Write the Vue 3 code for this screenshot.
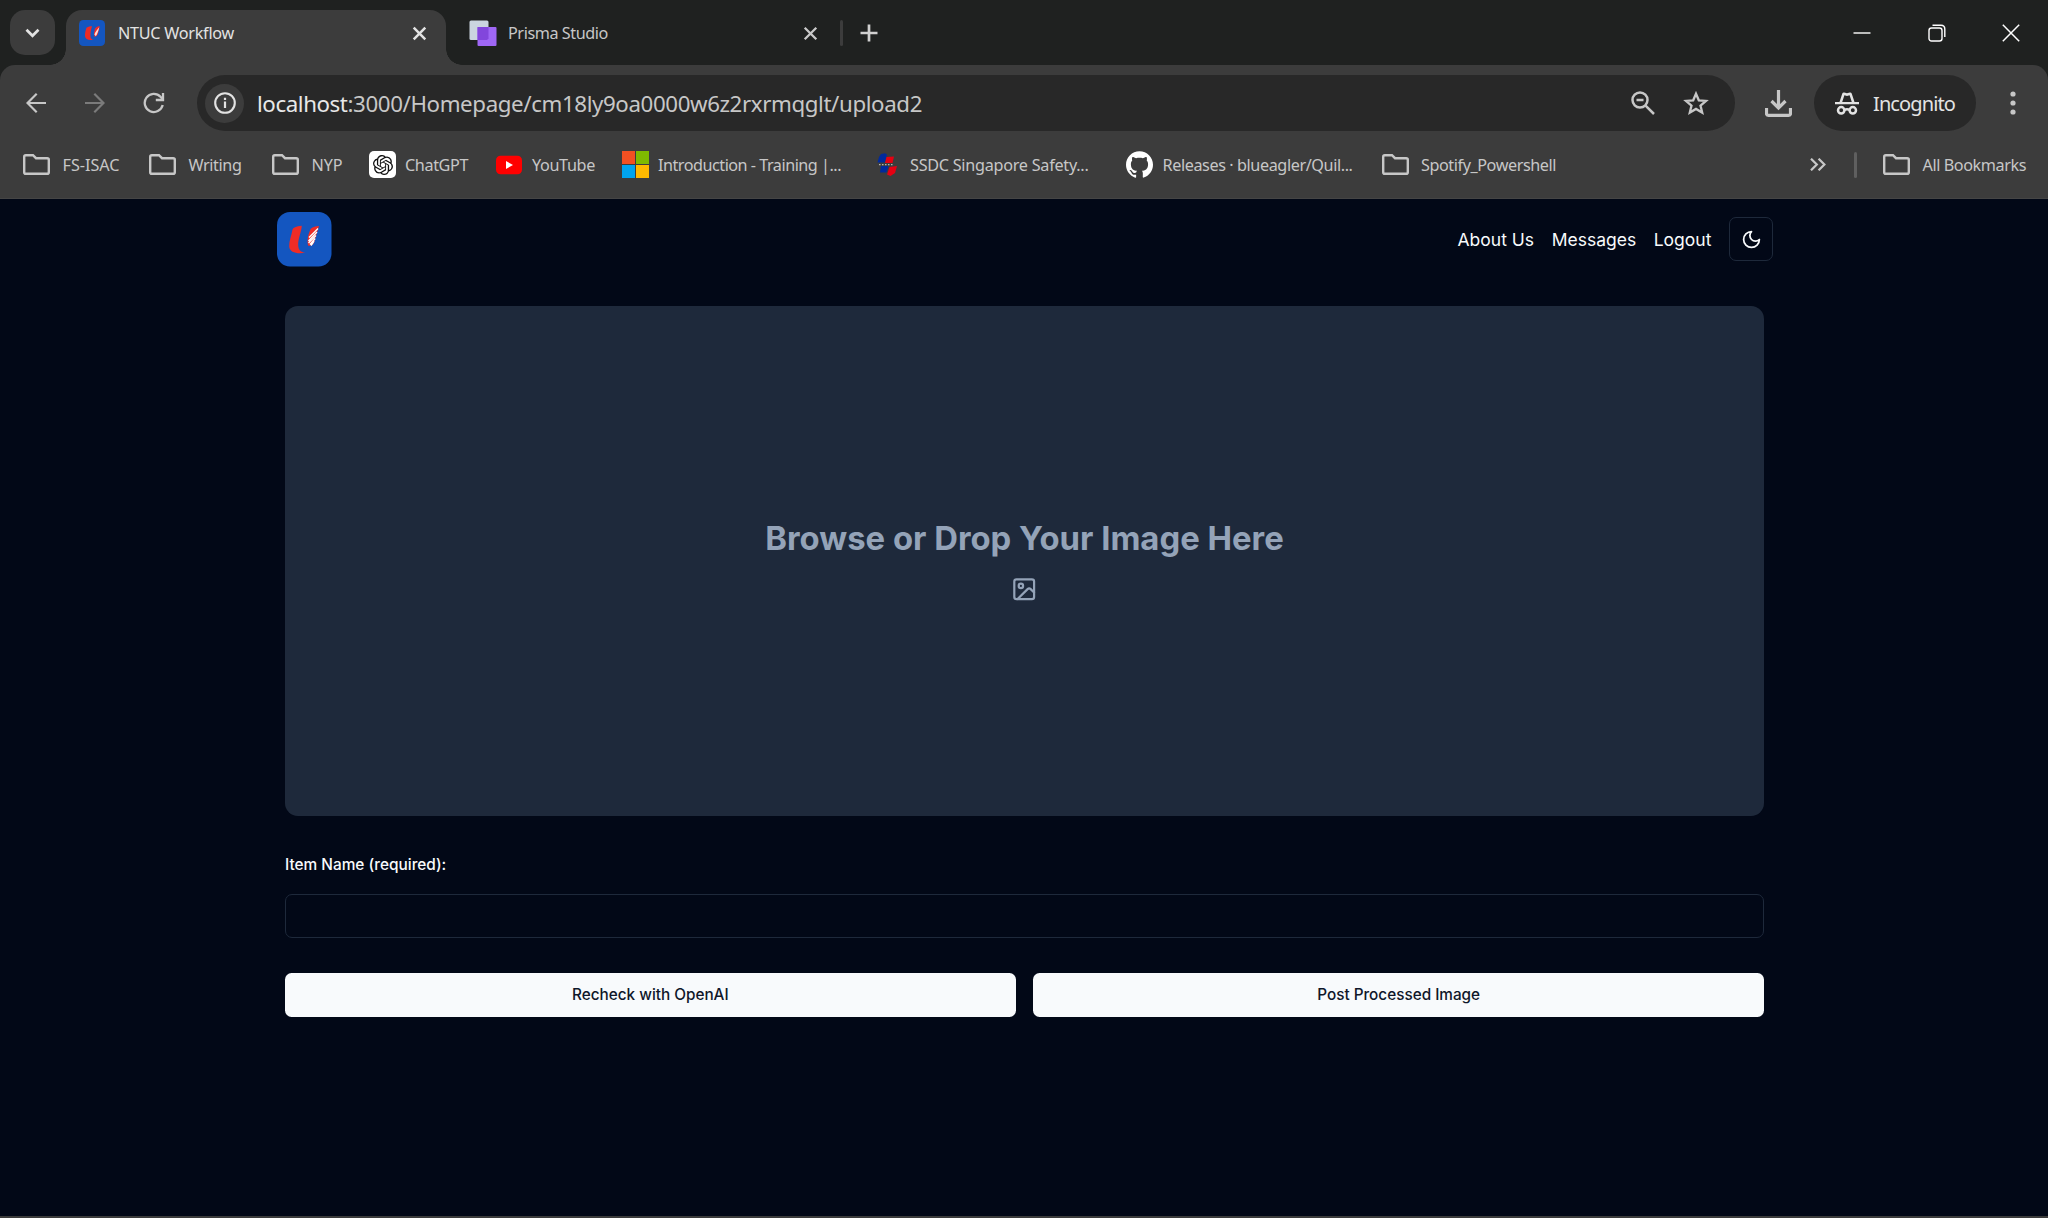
<script setup>
// Spreads a label over the given width (px) by adjusting its letter spacing.
const vFit = {
  mounted(el, { value }) {
    const natural = el.getBoundingClientRect().width
    el.style.letterSpacing = (value - natural) / el.textContent.length + 'px'
  }
}

const bookmarks = [
  { icon: 'folder', label: 'FS-ISAC', width: 57, gap: 29.5 },
  { icon: 'folder', label: 'Writing', width: 53, gap: 30.5 },
  { icon: 'folder', label: 'NYP', width: 31, gap: 26.5 },
  { icon: 'chatgpt', label: 'ChatGPT', width: 63, gap: 27.5 },
  { icon: 'youtube', label: 'YouTube', width: 63, gap: 26.5 },
  { icon: 'microsoft', label: 'Introduction - Training |...', width: 183, gap: 33 },
  { icon: 'ssdc', label: 'SSDC Singapore Safety...', width: 178.5, gap: 37.5 },
  { icon: 'github', label: 'Releases · blueagler/Quil...', width: 190, gap: 29 },
  { icon: 'folder', label: 'Spotify_Powershell', width: 135, gap: 0 }
]
const links = ['About Us', 'Messages', 'Logout']
</script>

<template>
  <div class="window">
    <header class="chrome">
      <div class="strip">
        <button class="tab-search" aria-label="Search tabs">
          <svg width="15" height="10" viewBox="0 0 15 10"><path d="M1.5 1.8 7.5 7.8 13.5 1.8" fill="none" stroke="#e3e3e3" stroke-width="2.7" /></svg>
        </button>
        <div class="tab active">
          <svg class="favicon" width="26" height="26" viewBox="0 0 54 54">
            <rect width="54" height="54" rx="9" fill="#1456c0" />
            <path d="M15.5 16C20 14 23 13 27 13 24 22 23 31 24 36 25 39 26 40 29 41 20 43 13 40 12.5 34 12 27 14 21 15.5 16Z" fill="#ee2a26" />
            <path d="M33 18C36 14 39 13 43 13L39 30Q36 35 32 35 30 26 33 18Z" fill="#ee2a26" />
            <path d="M42 15C38 20 34 24 32 30L35 34C38 29 40 24 42 15Z" fill="#ffd9d5" />
          </svg>
          <span v-fit="116" class="tab-title">NTUC Workflow</span>
          <svg class="tab-close" width="15" height="15" viewBox="0 0 15 15"><path d="M1.7 1.7 13.3 13.3M13.3 1.7 1.7 13.3" stroke="#e3e3e3" stroke-width="2.5" /></svg>
        </div>
        <div class="tab idle">
          <svg class="favicon" width="28" height="27" viewBox="0 0 28 27">
            <rect x="0.5" y="0.5" width="19" height="19.5" rx="1.5" fill="#cbd5e0" />
            <rect x="8.5" y="7" width="19" height="19" rx="1" fill="#9f67f5" />
            <path d="M8.5 7H19.5V18.5L18 20H8.5Z" fill="#8246dc" />
          </svg>
          <span v-fit="100" class="tab-title">Prisma Studio</span>
          <svg class="tab-close" width="15" height="15" viewBox="0 0 15 15"><path d="M1.7 1.7 13.3 13.3M13.3 1.7 1.7 13.3" stroke="#c9c9c9" stroke-width="2.3" /></svg>
        </div>
        <i class="tab-divider"></i>
        <svg class="new-tab" width="18" height="18" viewBox="0 0 18 18"><path d="M9 .5V17.5M.5 9H17.5" stroke="#d0d0d0" stroke-width="2.7" /></svg>
        <div class="window-controls">
          <svg width="18" height="18" viewBox="0 0 18 18"><path d="M.5 9H17.5" stroke="#fff" stroke-width="1.4" /></svg>
          <svg width="18" height="18" viewBox="0 0 18 18" fill="none" stroke="#fff" stroke-width="1.4"><rect x="1" y="4" width="13" height="13" rx="2.5" /><path d="M4.5 1.2H13Q16.8 1.2 16.8 5V13" /></svg>
          <svg width="18" height="18" viewBox="0 0 18 18"><path d="M.8 .8 17.2 17.2M17.2 .8 .8 17.2" stroke="#fff" stroke-width="1.5" /></svg>
        </div>
      </div>

      <div class="toolbars">
        <div class="toolbar">
          <svg class="back" width="20" height="20" viewBox="0 0 20 20" fill="none" stroke="#c7c7c7" stroke-width="2.2"><path d="M20 10H1.5M10.7 .8 1.5 10 10.7 19.2" /></svg>
          <svg class="forward" width="20" height="20" viewBox="0 0 20 20" fill="none" stroke="#7b7b7b" stroke-width="2.2"><path d="M0 10H18.5M9.3 .8 18.5 10 9.3 19.2" /></svg>
          <svg class="reload" width="22" height="22" viewBox="0 0 22 22" fill="none" stroke="#c7c7c7" stroke-width="2.3"><path d="M19.7 13A9.1 9.1 0 1 1 17.5 4.7L19.5 7" /><path d="M20 1V8H12.8" /></svg>
          <div class="address">
            <span class="site-info">
              <svg width="22" height="22" viewBox="0 0 22 22"><circle cx="11" cy="11" r="9.8" fill="none" stroke="#e3e3e3" stroke-width="2.1" /><path d="M11 9.6V16M11 5.8V8" stroke="#e3e3e3" stroke-width="2.2" /></svg>
            </span>
            <span class="url"><b v-fit="90.5">localhost</b><span v-fit="574.5">:3000/Homepage/cm18ly9oa0000w6z2rxrmqglt/upload2</span></span>
            <svg class="zoom-icon" width="24" height="24" viewBox="0 0 24 24" fill="none" stroke="#c7c7c7" stroke-width="2.5"><circle cx="9" cy="9" r="7.5" /><path d="M14.3 14.3 23 23M5.5 9H12.5" /></svg>
            <svg class="star" width="26" height="25" viewBox="0 0 26 25" fill="none" stroke="#c7c7c7" stroke-width="2.3"><path d="M13 2.7 15.8 9.3 23 9.9 17.5 14.6 19.2 21.6 13 17.9 6.8 21.6 8.5 14.6 3 9.9 10.2 9.3Z" /></svg>
          </div>
          <svg class="download" width="27" height="27" viewBox="0 0 27 27" fill="none" stroke="#c7c7c7" stroke-width="3.2"><path d="M13.5 0V17M6.5 11 13.5 18 20.5 11M1.5 18V23.5Q1.5 25.3 3.3 25.3H23.7Q25.5 25.3 25.5 23.5V18" /></svg>
          <div class="incognito">
            <svg width="24" height="23" viewBox="0 0 24 23">
              <path d="M0 10H24V12.2H0ZM4.5 10 7.3 1.6Q7.8 .2 9.2 .5L12 1.2 14.8 .5Q16.2 .2 16.7 1.6L19.5 10H16.8L14.6 3.2 12 3.9 9.4 3.2 7.2 10Z" fill="#e3e3e3" />
              <g fill="none" stroke="#e3e3e3" stroke-width="2.5"><circle cx="6.2" cy="18.3" r="3.2" /><circle cx="17.8" cy="18.3" r="3.2" /><path d="M9.2 18Q12 16.5 14.8 18" /></g>
            </svg>
            <span v-fit="82">Incognito</span>
          </div>
          <svg class="menu" width="6" height="24" viewBox="0 0 6 24" fill="#c7c7c7"><circle cx="3" cy="3" r="2.6" /><circle cx="3" cy="12" r="2.6" /><circle cx="3" cy="21" r="2.6" /></svg>
        </div>

        <div class="bookmarks">
          <div v-for="b in bookmarks" :key="b.label" class="bookmark" :style="{ marginRight: b.gap + 'px' }">
            <span class="icon" :class="b.icon">
              <svg v-if="b.icon === 'folder'" width="27" height="21" viewBox="0 0 27 21"><path d="M2.8 1.2H10L13 4.2H24.2Q25.8 4.2 25.8 5.8V18.2Q25.8 19.8 24.2 19.8H2.8Q1.2 19.8 1.2 18.2V2.8Q1.2 1.2 2.8 1.2Z" fill="none" stroke="#c7c7c7" stroke-width="2.4" /></svg>
              <svg v-else-if="b.icon === 'chatgpt'" width="20" height="20" viewBox="0 0 24 24"><path fill="#111" d="M22.2819 9.8211a5.9847 5.9847 0 0 0-.5157-4.9108 6.0462 6.0462 0 0 0-6.5098-2.9A6.0651 6.0651 0 0 0 4.9807 4.1818a5.9847 5.9847 0 0 0-3.9977 2.9 6.0462 6.0462 0 0 0 .7427 7.0966 5.98 5.98 0 0 0 .511 4.9107 6.051 6.051 0 0 0 6.5146 2.9001A5.9847 5.9847 0 0 0 13.2599 24a6.0557 6.0557 0 0 0 5.7718-4.2058 5.9894 5.9894 0 0 0 3.9977-2.9001 6.0557 6.0557 0 0 0-.7475-7.0729zm-9.022 12.6081a4.4755 4.4755 0 0 1-2.8764-1.0408l.1419-.0804 4.7783-2.7582a.7948.7948 0 0 0 .3927-.6813v-6.7369l2.02 1.1686a.071.071 0 0 1 .038.052v5.5826a4.504 4.504 0 0 1-4.4945 4.4944zm-9.6607-4.1254a4.4708 4.4708 0 0 1-.5346-3.0137l.142.0852 4.783 2.7582a.7712.7712 0 0 0 .7806 0l5.8428-3.3685v2.3324a.0804.0804 0 0 1-.0332.0615L9.74 19.9502a4.4992 4.4992 0 0 1-6.1408-1.6464zM2.3408 7.8956a4.485 4.485 0 0 1 2.3655-1.9728V11.6a.7664.7664 0 0 0 .3879.6765l5.8144 3.3543-2.0201 1.1685a.0757.0757 0 0 1-.071 0l-4.8303-2.7865A4.504 4.504 0 0 1 2.3408 7.872zm16.5963 3.8558L13.1038 8.364 15.1192 7.2a.0757.0757 0 0 1 .071 0l4.8303 2.7913a4.4944 4.4944 0 0 1-.6765 8.1042v-5.6772a.79.79 0 0 0-.407-.667zm2.0107-3.0231l-.142-.0852-4.7735-2.7818a.7759.7759 0 0 0-.7854 0L9.409 9.2297V6.8974a.0662.0662 0 0 1 .0284-.0615l4.8303-2.7866a4.4992 4.4992 0 0 1 6.6802 4.66zM8.3065 12.863l-2.02-1.1638a.0804.0804 0 0 1-.038-.0567V6.0742a4.4992 4.4992 0 0 1 7.3757-3.4537l-.142.0805L8.704 5.459a.7948.7948 0 0 0-.3927.6813zm1.0976-2.3654l2.602-1.4998 2.6069 1.4998v2.9994l-2.5974 1.4997-2.6067-1.4997Z" /></svg>
              <svg v-else-if="b.icon === 'youtube'" width="26" height="20" viewBox="0 0 26 20"><rect y=".8" width="26" height="18.5" rx="4.5" fill="#f00" /><path d="M10 6 17 10 10 14Z" fill="#fff" /></svg>
              <svg v-else-if="b.icon === 'microsoft'" width="27" height="27" viewBox="0 0 27 27"><rect width="13" height="13" fill="#f25022" /><rect x="14" width="13" height="13" fill="#7fba00" /><rect y="14" width="13" height="13" fill="#00a4ef" /><rect x="14" y="14" width="13" height="13" fill="#ffb900" /></svg>
              <svg v-else-if="b.icon === 'ssdc'" width="21" height="24" viewBox="0 0 21 24"><path d="M4 1 8 .3 10 1.5 8 9.5H.5L2 4Z" fill="#002a9c" /><path d="M9.5 4 17 3.5 15.5 10H8Z" fill="#e60012" /><path d="M2 11.6H17" stroke="#b5b5b5" stroke-width="1.2" stroke-dasharray="1.5 1.5" /><path d="M4 13H11.5L9.5 19.5H3Z" fill="#002a9c" /><path d="M12.5 14 20 13 18 20 13.5 23 10 21.5Z" fill="#e60012" /></svg>
              <svg v-else width="27" height="27" viewBox="0 0 24 24"><path fill="#fff" d="M12 .297c-6.63 0-12 5.373-12 12 0 5.303 3.438 9.8 8.205 11.385.6.113.82-.258.82-.577 0-.285-.01-1.04-.015-2.04-3.338.724-4.042-1.61-4.042-1.61C4.422 18.07 3.633 17.7 3.633 17.7c-1.087-.744.084-.729.084-.729 1.205.084 1.838 1.236 1.838 1.236 1.07 1.835 2.809 1.305 3.495.998.108-.776.417-1.305.76-1.605-2.665-.3-5.466-1.332-5.466-5.93 0-1.31.465-2.38 1.235-3.22-.135-.303-.54-1.523.105-3.176 0 0 1.005-.322 3.3 1.23.96-.267 1.98-.399 3-.405 1.02.006 2.04.138 3 .405 2.28-1.552 3.285-1.23 3.285-1.23.645 1.653.24 2.873.12 3.176.765.84 1.23 1.91 1.23 3.22 0 4.61-2.805 5.625-5.475 5.92.42.36.81 1.096.81 2.22 0 1.606-.015 2.896-.015 3.286 0 .315.21.69.825.57C20.565 22.092 24 17.592 24 12.297c0-6.627-5.373-12-12-12" /></svg>
            </span>
            <span v-fit="b.width">{{ b.label }}</span>
          </div>
          <div class="overflow">
            <svg width="16" height="13" viewBox="0 0 16 13" fill="none" stroke="#c7c7c7" stroke-width="2.2"><path d="M1 .7 6.8 6.5 1 12.3M8.6 .7 14.4 6.5 8.6 12.3" /></svg>
            <i></i>
            <svg width="27" height="21" viewBox="0 0 27 21"><path d="M2.8 1.2H10L13 4.2H24.2Q25.8 4.2 25.8 5.8V18.2Q25.8 19.8 24.2 19.8H2.8Q1.2 19.8 1.2 18.2V2.8Q1.2 1.2 2.8 1.2Z" fill="none" stroke="#c7c7c7" stroke-width="2.4" /></svg>
            <span v-fit="103.5">All Bookmarks</span>
          </div>
        </div>
      </div>
    </header>

    <main class="page">
      <nav class="nav">
        <svg class="logo" width="55" height="55" viewBox="0 0 55 55">
          <rect width="54.5" height="54.5" rx="13" fill="#1456c0" />
          <path d="M15.5 17.5Q16 14.8 24.8 13.8C24.5 20 20.8 27 21.2 33.5 21.6 38.5 23.8 40.3 28.5 40.6 21 42.3 12.6 40.8 12.2 34.5 12 28.5 14.6 23.5 15.5 17.5Z" fill="#f02c26" />
          <path d="M33 18.5Q33.5 14.6 42 14L37 31Q35 34.5 31 33.5 29.5 26 33 18.5Z" fill="#f02c26" />
          <path d="M41 16.5 32 25.5M40 20 31.5 29M39 23.5 31.5 31M38.2 26.5 33 32.5M37 29 34 33.5" stroke="#fff" stroke-width="1.4" />
        </svg>
        <div class="links">
          <a v-for="l in links" :key="l">{{ l }}</a>
          <button class="theme" aria-label="Toggle theme">
            <svg width="21" height="21" viewBox="0 0 24 24" fill="none" stroke="#f8fafc" stroke-width="2" stroke-linecap="round" stroke-linejoin="round"><path d="M12 3a6 6 0 0 0 9 9 9 9 0 1 1-9-9Z" /></svg>
          </button>
        </div>
      </nav>

      <section class="form">
        <div class="dropzone">
          <h1>Browse or Drop Your Image Here</h1>
          <svg width="26.4" height="26.4" viewBox="0 0 24 24" fill="none" stroke="#94a3b8" stroke-width="2" stroke-linecap="round" stroke-linejoin="round"><rect x="3" y="3" width="18" height="18" rx="2" /><circle cx="9" cy="9" r="2" /><path d="m21 15-3.086-3.086a2 2 0 0 0-2.828 0L6 21" /></svg>
        </div>
        <label for="item">Item Name (required):</label>
        <input id="item" type="text" />
        <div class="actions">
          <button>Recheck with OpenAI</button>
          <button>Post Processed Image</button>
        </div>
      </section>
    </main>
  </div>
</template>

<style>
body { margin: 0; background: #020817; }
</style>

<style scoped>
* { box-sizing: border-box; }
svg { display: block; flex: none; }
button { border: 0; padding: 0; }
.window { display: flex; flex-direction: column; height: 1218px; overflow: hidden; background: #020817; border-bottom: 2px solid #3c3c3c; }
.chrome { flex: none; height: 199px; background: #1f2120; color: #c7c7c7; font: 16.2px "Noto Sans", "Open Sans", sans-serif; white-space: nowrap; }
.strip { display: flex; align-items: center; height: 65px; padding-left: 10px; }
.tab-search { display: grid; place-items: center; width: 45px; height: 45px; margin-right: 11px; border-radius: 15px; background: #3c3c3c; }
.tab { display: flex; align-items: center; }
.favicon { margin-right: 14px; }
.tab-close { margin-left: auto; }
.tab.active { position: relative; align-self: flex-end; width: 380px; height: 55px; padding: 0 19px 9px 13px; border-radius: 16px 16px 0 0; background: #3c3c3c; color: #e3e3e3; }
.active .favicon { margin-right: 13px; }
.tab.active::before, .tab.active::after { content: ""; position: absolute; bottom: 0; width: 16px; height: 16px; }
.tab.active::before { left: -16px; background: radial-gradient(circle at 0 0, transparent 15.5px, #3c3c3c 16px); }
.tab.active::after { right: -16px; background: radial-gradient(circle at 100% 0, transparent 15.5px, #3c3c3c 16px); }
.tab.idle { width: 372px; padding: 1px 0 0 23px; }
.idle .favicon { margin-right: 11px; }
.tab-divider { width: 3px; height: 26px; margin: 0 17px 0 22px; border-radius: 2px; background: #3c3c3c; }
.window-controls { display: flex; gap: 56.5px; margin-left: auto; padding-right: 28px; }
.toolbars { height: 134px; border-radius: 15px 15px 0 0; background: #3c3c3c; border-bottom: 1px solid #454545; }
.toolbar { display: flex; align-items: center; height: 76px; padding: 0 32px 0 26px; }
.forward { margin-left: 39px; }
.reload { margin-left: 38px; }
.address { display: flex; align-items: center; width: 1538px; height: 56px; margin-left: 32px; padding-left: 8px; border-radius: 28px; background: #282828; }
.site-info { display: grid; place-items: center; width: 39px; height: 39px; border-radius: 50%; background: #3c3c3c; }
.url { margin-left: 13px; font-size: 22.3px; }
.url b { font-weight: 400; color: #e8e8e8; }
.url b, .url span { display: inline-block; }
.zoom-icon { margin-left: auto; }
.star { margin: 0 26px 0 28px; }
.download { margin-left: 30px; }
.incognito { display: flex; align-items: center; gap: 14px; width: 162px; height: 56px; margin-left: 22px; padding-left: 21px; border-radius: 28px; background: #282828; color: #e3e3e3; font-size: 20px; }
.menu { margin-left: auto; }
.bookmarks { display: flex; align-items: center; height: 47px; padding: 0 22px 0 23px; }
.bookmark { display: flex; align-items: center; }
.icon { display: grid; place-items: center; width: 27px; height: 27px; margin-right: 12.5px; }
.icon.chatgpt { border-radius: 5px; background: #fff; margin-right: 9px; }
.icon.youtube, .icon.microsoft, .icon.github { margin-right: 9.5px; }
.icon.ssdc { margin-right: 9px; }
.overflow { display: flex; align-items: center; margin-left: auto; }
.overflow i { width: 3px; height: 26px; margin: 0 26px 0 28px; border-radius: 2px; background: #5f5f5f; }
.overflow span { margin-left: 13px; }

.page { flex: 1; font-family: Inter, sans-serif; color: #f8fafc; }
.nav { display: flex; align-items: flex-start; justify-content: space-between; width: 1496px; margin: 0 auto 0 277px; padding-top: 13px; }
.links { display: flex; align-items: center; gap: 17.6px; margin-top: 5px; font-size: 17.5px; }
.theme { display: grid; place-items: center; width: 44px; height: 44px; border: 1px solid #1e293b; border-radius: 7px; background: transparent; }
.form { width: 1479px; margin: 39px 0 0 285px; }
.dropzone { display: flex; flex-direction: column; align-items: center; justify-content: center; gap: 18px; height: 510px; padding-bottom: 2px; border-radius: 13px; background: #1e293b; color: #94a3b8; }
h1 { margin: 0; font-size: 32.85px; line-height: 40px; font-weight: 700; white-space: nowrap; }
label { display: block; margin-top: 38px; font-size: 15.4px; line-height: 22px; font-weight: 500; }
input { display: block; width: 100%; height: 44px; margin-top: 18px; border: 1px solid #1e293b; border-radius: 7px; background: #020817; outline: 0; }
.actions { display: flex; gap: 17.6px; margin-top: 35px; }
.actions button { flex: 1; height: 43.5px; padding-bottom: 1px; border-radius: 6.5px; background: #f8fafc; color: #0f172a; font: 500 15.3px Inter, sans-serif; }
</style>
